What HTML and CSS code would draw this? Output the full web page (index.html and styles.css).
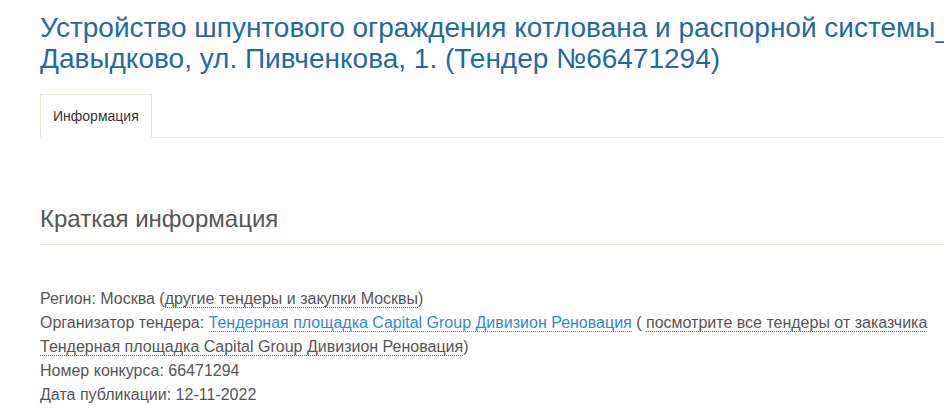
FILE: index.html
```html
<!DOCTYPE html>
<html lang="ru">
<head>
  <meta charset="UTF-8">
  <meta name="viewport" content="width=device-width, initial-scale=1.0">
  <title>Тендер №66471294</title>
  <link rel="stylesheet" href="styles.css">
</head>
<body>
  <div class="page">
    <h1 class="tender-title">Устройство шпунтового ограждения котлована и распорной системы_ Давыдково, ул. Пивченкова, 1. (Тендер №66471294)</h1>

    <ul class="tabs">
      <li class="tab active"><a href="#info">Информация</a></li>
    </ul>

    <div class="tab-content" id="info">
      <h2 class="section-title">Краткая информация</h2>
      <div class="info">
        <p>Регион: Москва (<a class="dotted" href="#">другие тендеры и закупки Москвы</a>)</p>
        <p>Организатор тендера: <a class="org" href="#">Тендерная площадка Capital Group Дивизион Реновация</a> ( <a class="dotted" href="#">посмотрите все тендеры от заказчика Тендерная площадка Capital Group Дивизион Реновация</a>)</p>
        <p>Номер конкурса: 66471294</p>
        <p>Дата публикации: 12-11-2022</p>
      </div>
    </div>
  </div>
</body>
</html>
```

FILE: styles.css
```css
html, body {
  overflow-x: hidden;
}
body {
  margin: 0;
  font-family: 'Liberation Sans', Arial, sans-serif;
  color: #555;
  background-color: #fff;
}
.page {
  width: 920px;
  padding-left: 40px;
}
.tender-title {
  margin: 12px 0 0;
  font-size: 28px;
  font-weight: normal;
  line-height: 31px;
  color: #1f6aa3;
}
.tabs {
  list-style: none;
  margin: 20px -40px 0 0;
  padding: 0;
  display: flex;
  border-bottom: 1px solid #e8e6d6;
}
.tab a {
  display: block;
  padding: 12px 12px;
  font-size: 14px;
  line-height: 18px;
  color: #333;
  text-decoration: none;
  border: 1px solid #e8e6d6;
  margin-bottom: -1px;
}
.tab.active a {
  border-bottom-color: #fff;
  background-color: #fff;
}
.section-title {
  margin: 69px -40px 0 0;
  padding-bottom: 13px;
  font-size: 24px;
  font-weight: normal;
  line-height: 24px;
  color: #555;
  border-bottom: 1px solid #ebe9dc;
}
.info {
  margin-top: 42px;
  font-size: 16px;
  line-height: 24px;
}
.info p {
  margin: 0;
}
.info a {
  text-decoration: none;
  border-bottom: 1px dotted #555;
  color: #555;
}
.info a.org {
  color: #2f8ad3;
  border-bottom-color: #2f8ad3;
}
```
